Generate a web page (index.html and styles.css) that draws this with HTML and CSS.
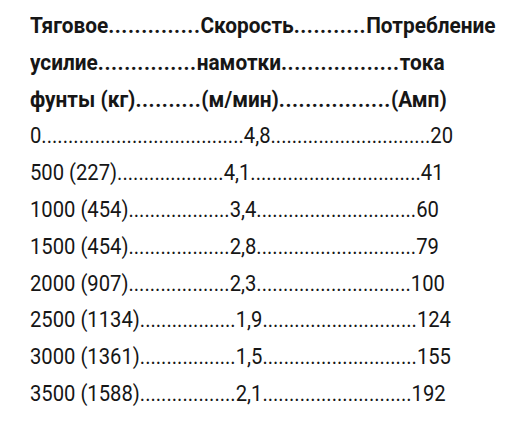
FILE: index.html
```
<!DOCTYPE html>
<html lang="ru">
<head>
  <meta charset="UTF-8">
  <title>Таблица лебёдки</title>
  <link rel="stylesheet" href="styles.css">
</head>
<body>

  <div class="spec">
    <p class="line head">Тяговое<span class="leader">..............</span>Скорость<span class="leader">...........</span>Потребление</p>
    <p class="line head">усилие<span class="leader">...............</span>намотки<span class="leader">..................</span>тока</p>
    <p class="line head">фунты (кг)<span class="leader">..........</span>(м/мин)<span class="leader">.................</span>(Амп)</p>
    <p class="line">0......................................4,8..............................20</p>
    <p class="line">500 (227)....................4,1................................41</p>
    <p class="line">1000 (454)...................3,4..............................60</p>
    <p class="line">1500 (454)...................2,8..............................79</p>
    <p class="line">2000 (907)...................2,3.............................100</p>
    <p class="line">2500 (1134)..................1,9.............................124</p>
    <p class="line">3000 (1361)..................1,5.............................155</p>
    <p class="line">3500 (1588)..................2,1............................192</p>
  </div>

</body>
</html>
```

FILE: styles.css
```
body {
  margin: 0;
  background: #fff;
  color: #161616;
  font-family: Roboto, "Liberation Sans", sans-serif;
}

.spec {
  padding: 7px 0 0 30px;
}

/* narrow the face to the condensed look of the original */
.line {
  margin: 0;
  font-size: 22.5px;
  line-height: 36.8px;
  white-space: nowrap;
  transform: scaleX(0.898);
  transform-origin: 0 50%;
}

.head {
  font-weight: bold;
  transform: scaleX(0.925);
}

.leader {
  letter-spacing: 0.6px;
}
```
